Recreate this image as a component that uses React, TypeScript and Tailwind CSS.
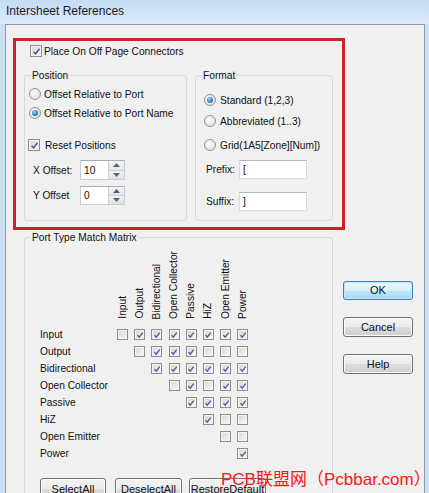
import React from 'react'

const ui = "font-['Liberation_Sans',Arial,sans-serif] text-[10.2px] leading-[13px] text-[#111] whitespace-nowrap"

const MATRIX_COLS = ['Input', 'Output', 'Bidirectional', 'Open Collector', 'Passive', 'HiZ', 'Open Emitter', 'Power']

// row i starts at column i
const MATRIX: boolean[][] = [
  [false, true, true, true, true, true, true, true],
  [false, true, true, true, false, false, false],
  [true, true, true, true, true, true],
  [false, true, false, true, true],
  [true, true, true, true],
  [true, false, false],
  [false, false],
  [true]
]

function CheckBox({ checked, small = false }: { checked: boolean; small?: boolean }) {
  return (
    <span
      className={`flex shrink-0 items-center justify-center border border-[#8e8f8f] bg-[linear-gradient(135deg,#d3d6db,#f8f8f8)] shadow-[inset_0_0_0_1px_#f4f4f4] ${
        small ? 'h-[11px] w-[11px]' : 'h-[12px] w-[12px]'
      }`}
    >
      {checked && (
        <svg viewBox="0 0 10 10" className={small ? 'h-[8px] w-[8px]' : 'h-[9px] w-[9px]'}>
          <path d="M1.8 5.2 L4 7.6 L8.4 2" fill="none" stroke="#4a5c96" strokeWidth="1.7" />
        </svg>
      )}
    </span>
  )
}

function Radio({ on }: { on: boolean }) {
  return (
    <span className="flex h-[12px] w-[12px] shrink-0 items-center justify-center rounded-full border border-[#8f9398] bg-[radial-gradient(circle_at_35%_35%,#fdfdfd,#d4d7db)]">
      {on && (
        <span className="h-[6px] w-[6px] rounded-full bg-[radial-gradient(circle_at_40%_35%,#9bd6f7,#2b7bbd_60%,#15507f)]" />
      )}
    </span>
  )
}

function Spinner() {
  return (
    <div className="flex w-[16px] flex-col border-l border-[#c9ced5]">
      <div className="flex flex-1 items-center justify-center border-b border-[#c9ced5] bg-[linear-gradient(#f6f6f6,#e3e5e8)]">
        <svg viewBox="0 0 7 4" className="h-[4px] w-[7px]">
          <path d="M0 4 L3.5 0 L7 4 Z" fill="#4e6488" />
        </svg>
      </div>
      <div className="flex flex-1 items-center justify-center bg-[linear-gradient(#f2f2f2,#dfe1e4)]">
        <svg viewBox="0 0 7 4" className="h-[4px] w-[7px]">
          <path d="M0 0 L7 0 L3.5 4 Z" fill="#4e6488" />
        </svg>
      </div>
    </div>
  )
}

function Button({ label, primary = false, className = '' }: { label: string; primary?: boolean; className?: string }) {
  return (
    <div
      className={`flex items-center justify-center rounded-[3px] border text-[11px] ${
        primary
          ? 'border-[#3c7fb1] bg-[linear-gradient(#eaf6fd_0%,#d9f0fc_50%,#bee6fd_51%,#a7d9f5_100%)] shadow-[inset_0_0_0_1px_#c7e6f9]'
          : 'border-[#707070] bg-[linear-gradient(#f2f2f2_0%,#ebebeb_50%,#dddddd_51%,#cfcfcf_100%)] shadow-[inset_0_0_0_1px_#fcfcfc]'
      } ${className}`}
    >
      {label}
    </div>
  )
}

function GroupBox({ title, className, children }: { title: string; className: string; children: React.ReactNode }) {
  return (
    <fieldset className={`rounded-[3px] border border-[#d2d9df] p-0 ${className}`}>
      <legend className="ml-[6px] px-[1px] leading-[13px]">{title}</legend>
      {children}
    </fieldset>
  )
}

export default function App() {
  return (
    <div className={`relative h-[493px] w-[429px] overflow-hidden bg-[#cbdff5] ${ui}`}>
      <div className="flex h-[24px] items-center bg-[linear-gradient(#c6dcf4,#d9e8f9)] pb-[2px] pl-[6px] text-[12px] text-[#1b1b1b]">
        Intersheet References
      </div>

      <div className="ml-[5px] h-[469px] w-[420px] border-x border-t border-[#8e9aa7] bg-[#f0f0f0]">
        {/* highlighted section */}
        <div className="ml-[7px] mt-[13px] h-[192px] w-[332px] border-[3px] border-[#c8232a]">
          <div className="ml-[14px] mt-[4px] flex h-[12px] items-center gap-[2px]">
            <CheckBox checked />
            <span>Place On Off Page Connectors</span>
          </div>

          <div className="ml-[8px] mt-[12px] flex gap-[8px]">
            <GroupBox title="Position" className="h-[152px] w-[163px]">
              <div className="flex flex-col pl-[4px]">
                <div className="mt-[4px] flex h-[16px] items-center gap-[3px]">
                  <Radio on={false} />
                  <span>Offset Relative to Port</span>
                </div>
                <div className="mt-[3px] flex h-[16px] items-center gap-[3px]">
                  <Radio on />
                  <span>Offset Relative to Port Name</span>
                </div>
                <div className="-ml-[1px] mt-[16px] flex h-[16px] items-center gap-[5px]">
                  <CheckBox checked />
                  <span>Reset Positions</span>
                </div>
                <div className="ml-[4px] mt-[7px] flex h-[20px] items-center">
                  <span className="w-[47px]">X Offset:</span>
                  <div className="flex h-[20px] w-[45px] border border-[#c9ced5] border-t-[#abadb3] bg-white">
                    <span className="flex-1 self-center pl-[3px]">10</span>
                    <Spinner />
                  </div>
                </div>
                <div className="ml-[4px] mt-[6px] flex h-[19px] items-center">
                  <span className="w-[47px]">Y Offset</span>
                  <div className="flex h-[19px] w-[45px] border border-[#c9ced5] border-t-[#abadb3] bg-white">
                    <span className="flex-1 self-center pl-[3px]">0</span>
                    <Spinner />
                  </div>
                </div>
              </div>
            </GroupBox>

            <GroupBox title="Format" className="h-[152px] w-[138px]">
              <div className="flex flex-col pl-[8px]">
                <div className="mt-[10px] flex h-[16px] items-center gap-[4px]">
                  <Radio on />
                  <span>Standard (1,2,3)</span>
                </div>
                <div className="mt-[5px] flex h-[16px] items-center gap-[4px]">
                  <Radio on={false} />
                  <span>Abbreviated (1..3)</span>
                </div>
                <div className="mt-[8px] flex h-[16px] items-center gap-[4px]">
                  <Radio on={false} />
                  <span>Grid(1A5[Zone][Num])</span>
                </div>
                <div className="ml-[2px] mt-[7px] flex h-[19px] items-center">
                  <span className="w-[33px]">Prefix:</span>
                  <div className="flex h-[19px] w-[68px] items-center border border-[#d6dbe0] border-t-[#b5b8be] bg-white pl-[3px]">[</div>
                </div>
                <div className="ml-[2px] mt-[13px] flex h-[19px] items-center">
                  <span className="w-[33px]">Suffix:</span>
                  <div className="flex h-[19px] w-[68px] items-center border border-[#d6dbe0] border-t-[#b5b8be] bg-white pl-[3px]">]</div>
                </div>
              </div>
            </GroupBox>
          </div>
        </div>

        <div className="flex">
          <GroupBox title="Port Type Match Matrix" className="ml-[18px] mt-[1px] h-[280px] w-[309px]">
            <div className="pl-[15px]">
              <div className="flex h-[75px] items-end">
                <div className="w-[77px]" />
                {MATRIX_COLS.map((c) => (
                  <div key={c} className="w-[17.2px]">
                    <div className="flex w-[11px] justify-center">
                      <span className="rotate-180 leading-[12px] [writing-mode:vertical-rl]">{c}</span>
                    </div>
                  </div>
                ))}
              </div>

              <div className="mt-[7px] flex flex-col">
                {MATRIX_COLS.map((row, i) => (
                  <div key={row} className="flex h-[17px] items-center">
                    <span className="w-[77px]">{row}</span>
                    {MATRIX_COLS.map((_, j) => (
                      <div key={j} className="w-[17.2px]">
                        {j >= i && <CheckBox small checked={MATRIX[i][j - i]} />}
                      </div>
                    ))}
                  </div>
                ))}
              </div>

              <div className="mt-[16px] flex">
                <Button label="SelectAll" className="h-[22px] w-[66px]" />
                <Button label="DeselectAll" className="ml-[9px] h-[22px] w-[67px]" />
                <Button label="RestoreDefault" className="ml-[7px] h-[22px] w-[77px]" />
              </div>
            </div>
          </GroupBox>

          <div className="ml-[10px] mt-[51px] flex flex-col">
            <Button label="OK" primary className="h-[19px] w-[70px]" />
            <Button label="Cancel" className="mt-[17px] h-[20px] w-[70px]" />
            <Button label="Help" className="mt-[17px] h-[20px] w-[70px]" />
          </div>
        </div>
      </div>

      <div className="absolute left-[221px] top-[471px] font-['Liberation_Sans','Noto_Sans_CJK_SC',sans-serif] text-[17px] leading-none text-[#ff1414]">
        PCB联盟网（Pcbbar.com）
      </div>
    </div>
  )
}
